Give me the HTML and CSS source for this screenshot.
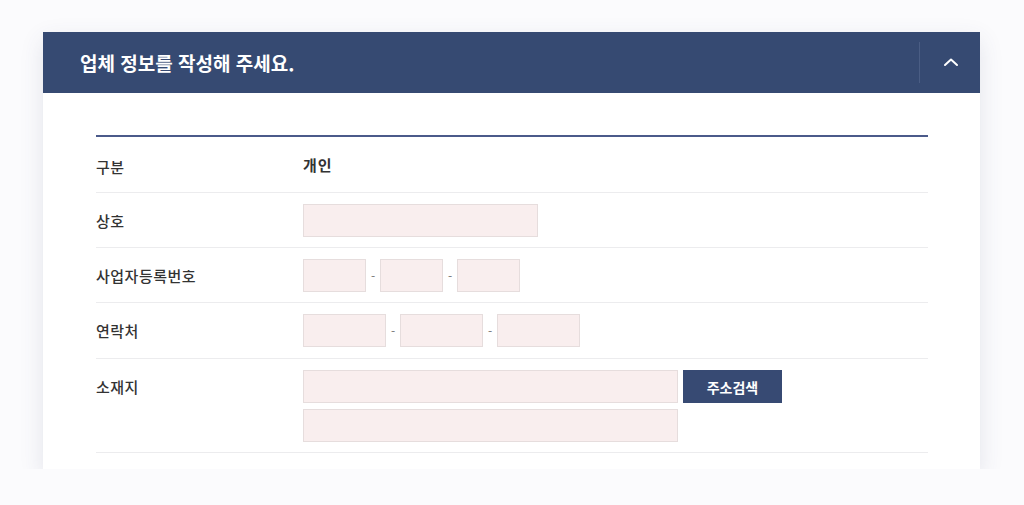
FILE: index.html
```html
<!DOCTYPE html>
<html lang="ko">
<head>
  <meta charset="UTF-8" />
  <meta name="viewport" content="width=device-width, initial-scale=1.0"/>
  <title>업체 정보</title>
  <link rel="stylesheet" href="styles.css">
</head>
<body>
  <div class="panel">
    <div class="panel-head">
      <h2>업체 정보를 작성해 주세요.</h2>
      <button class="toggle" type="button" aria-label="접기">
        <span class="toggle-line"></span>
        <svg width="16" height="10" viewBox="0 0 16 10">
          <path d="M2 8 L8 2.5 L14 8" fill="none" stroke="#fff" stroke-width="2" stroke-linecap="round" stroke-linejoin="round"/>
        </svg>
      </button>
    </div>

    <div class="panel-body">
      <div class="form-table">
        <div class="row row-text">
          <div class="label">구분</div>
          <div class="value"><strong>개인</strong></div>
        </div>

        <div class="row">
          <div class="label">상호</div>
          <div class="value">
            <input type="text" class="input w-name">
          </div>
        </div>

        <div class="row">
          <div class="label">사업자등록번호</div>
          <div class="value">
            <input type="text" class="input w-biz">
            <span class="dash">-</span>
            <input type="text" class="input w-biz">
            <span class="dash">-</span>
            <input type="text" class="input w-biz">
          </div>
        </div>

        <div class="row row-tel">
          <div class="label">연락처</div>
          <div class="value">
            <input type="text" class="input w-tel">
            <span class="dash">-</span>
            <input type="text" class="input w-tel">
            <span class="dash">-</span>
            <input type="text" class="input w-tel">
          </div>
        </div>

        <div class="row">
          <div class="label">소재지</div>
          <div class="value value-stack">
            <div class="line">
              <input type="text" class="input w-addr">
              <button type="button" class="btn-search">주소검색</button>
            </div>
            <div class="line">
              <input type="text" class="input w-addr">
            </div>
          </div>
        </div>
      </div>
    </div>
  </div>
</body>
</html>
```

FILE: styles.css
```css
* {
  box-sizing: border-box;
}

body {
  margin: 0;
  padding: 32px 44px 0 43px;
  font-family: "Noto Sans CJK KR", "Noto Sans", sans-serif;
  background: #fbfbfd;
  color: #333;
}

.panel {
  background: #fff;
  box-shadow: 0 8px 22px rgba(60, 70, 110, 0.13);
}

.panel-head {
  display: flex;
  align-items: center;
  height: 61px;
  background: #364a72;
  color: #fff;
}

.panel-head h2 {
  flex: 1;
  margin: 0;
  padding-left: 37px;
  font-size: 19px;
  font-weight: 700;
}

.toggle {
  position: relative;
  display: flex;
  align-items: center;
  justify-content: center;
  width: 61px;
  height: 61px;
  padding: 0;
  border: none;
  background: none;
  cursor: pointer;
}

.toggle-line {
  position: absolute;
  left: 0;
  top: 10px;
  bottom: 10px;
  width: 1px;
  background: #4a5d84;
}

.toggle svg {
  margin-left: 2px;
  margin-top: -2px;
}

.panel-body {
  padding: 42px 52px 16px 53px;
}

.form-table {
  border-top: 2px solid #4b5a8a;
}

.row {
  display: flex;
  align-items: flex-start;
  padding: 11px 0 10px;
  border-bottom: 1px solid #ececee;
}

.row-text {
  min-height: 56px;
  align-items: center;
  padding: 0;
}

.row-tel {
  padding-bottom: 11px;
}

.label {
  width: 207px;
  font-size: 15px;
  font-weight: 500;
  letter-spacing: 0.5px;
  line-height: 33px;
  color: #333;
}

.row-text .label {
  padding-top: 4px;
}

.value {
  display: flex;
  align-items: center;
  font-size: 15px;
}

.value strong {
  font-weight: 700;
  letter-spacing: 1px;
  color: #333;
}

.value-stack {
  flex-direction: column;
  align-items: flex-start;
  gap: 6px;
}

.line {
  display: flex;
  align-items: center;
}

.input {
  height: 33px;
  margin: 0;
  padding: 0 8px;
  border: 1px solid #e6dddd;
  background: #f9eeee;
  font-family: inherit;
  font-size: 13px;
}

.w-name { width: 235px; }
.w-biz  { width: 63px; }
.w-tel  { width: 83px; }
.w-addr { width: 375px; }

.dash {
  width: 14px;
  text-align: center;
  font-size: 12px;
  color: #777;
}

.btn-search {
  width: 99px;
  height: 33px;
  margin-left: 5px;
  border: none;
  background: #374a73;
  color: #fff;
  font-family: inherit;
  font-size: 14px;
  font-weight: 700;
  cursor: pointer;
}
```
